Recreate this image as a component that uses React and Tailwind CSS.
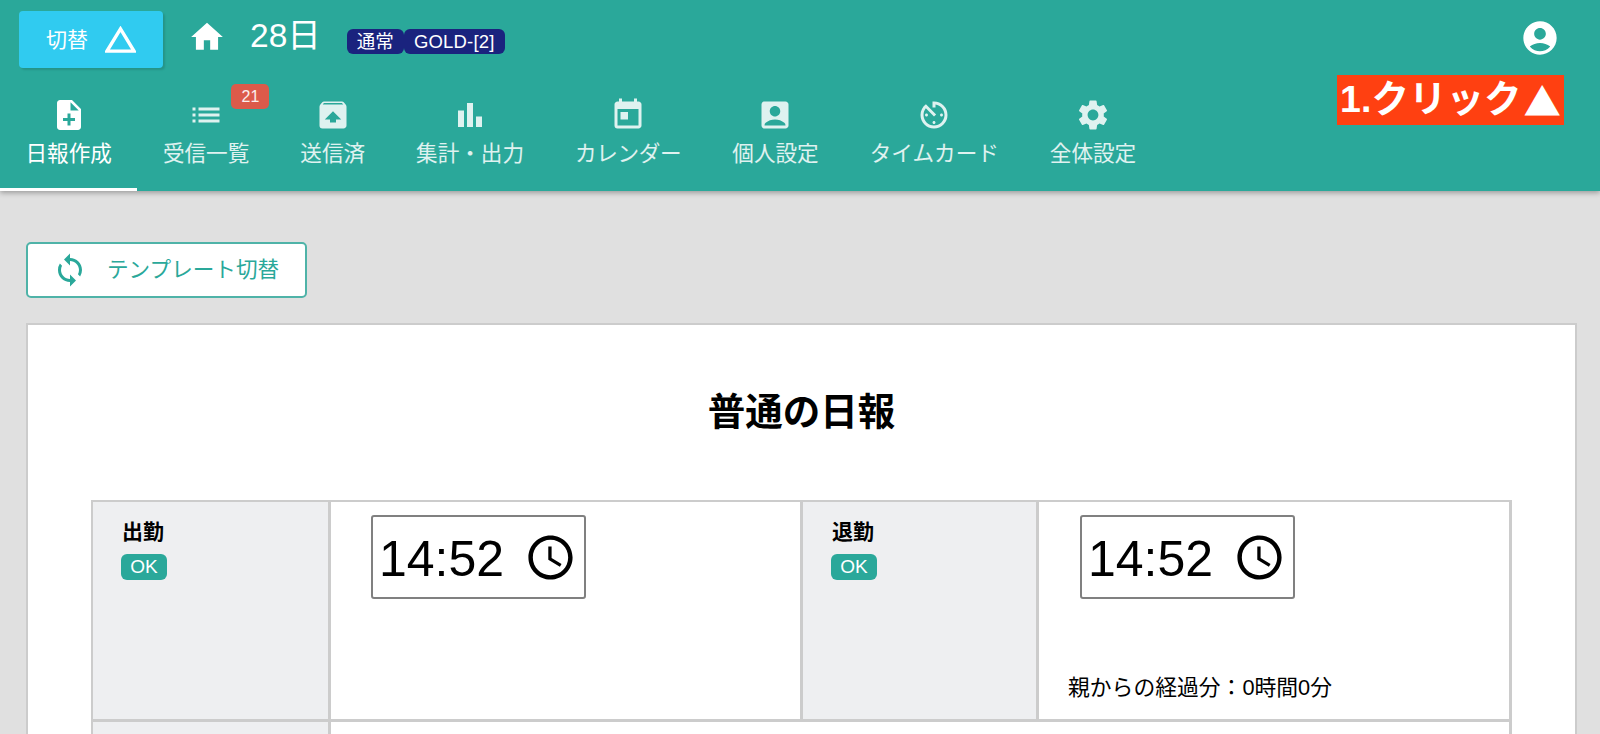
// App.jsx
import {
  MdHome,
  MdNoteAdd,
  MdList,
  MdUnarchive,
  MdBarChart,
  MdToday,
  MdAccountBox,
  MdAvTimer,
  MdSettings,
  MdAccountCircle,
  MdSync,
  MdAccessTime,
} from "react-icons/md";

const TABS = [
  { label: "日報作成", Icon: MdNoteAdd, active: true },
  { label: "受信一覧", Icon: MdList, badge: "21" },
  { label: "送信済", Icon: MdUnarchive },
  { label: "集計・出力", Icon: MdBarChart },
  { label: "カレンダー", Icon: MdToday, tight: true },
  { label: "個人設定", Icon: MdAccountBox },
  { label: "タイムカード", Icon: MdAvTimer },
  { label: "全体設定", Icon: MdSettings },
];

function Tab({ label, Icon, active, badge, tight }) {
  return (
    <div
      className={`relative flex h-[103px] flex-col items-center border-b-[3px] px-[25.5px] pt-[9px] ${
        active ? "border-white text-white" : "border-transparent text-white/85"
      }`}
    >
      <Icon className="h-[36px] w-[36px]" />
      <span className={`mt-[6px] whitespace-nowrap text-[21.6px] leading-[30px] ${tight ? "tracking-[-0.35px]" : ""}`}>
        {label}
      </span>
      {badge && (
        <span className="absolute left-[94px] top-[-4px] flex h-[25px] w-[38px] items-center justify-center rounded-[5px] bg-[#dc5a4a] text-[16px] text-white/90">
          {badge}
        </span>
      )}
    </div>
  );
}

function TimeBox() {
  return (
    <div className="flex h-[84px] w-[215px] items-center rounded-[3px] border-2 border-[#808080] pl-[6px] text-black">
      <span className="mt-[3px] text-[50px] leading-none">14:52</span>
      <MdAccessTime className="ml-[20px] h-[53px] w-[53px]" />
    </div>
  );
}

function LabelCell({ label }) {
  return (
    <div className="flex flex-col items-start bg-[#eeeff1] pl-[29px] pt-[15px]">
      <span className="text-[21px] font-bold leading-[30px] text-black">{label}</span>
      <span className="ml-[-1px] mt-[7px] flex h-[26px] w-[46px] items-center justify-center rounded-[6px] bg-[#2aa89a] text-[19px] text-white">
        OK
      </span>
    </div>
  );
}

export default function App() {
  return (
    <div className="relative h-screen overflow-hidden bg-[#e0e0e0] font-['Liberation_Sans','Noto_Sans_CJK_JP',sans-serif]">
      <header className="h-[191px] bg-[#2aa89a] text-white shadow-[0_2px_5px_rgba(0,0,0,0.3)]">
        <div className="flex h-[88px] items-start pl-[19px] pr-[40px] pt-[11px]">
          <button className="flex h-[57px] w-[144px] items-center justify-center gap-[17px] rounded-[4px] bg-[#30cbf0] text-[21px] shadow-[2px_2px_2px_rgba(0,0,0,0.12)]">
            切替
            <svg viewBox="0 0 32 28" className="h-[27px] w-[31px]" fill="none" stroke="white" strokeWidth="3.5">
              <path d="M16 3 L30 26 H2 Z" />
            </svg>
          </button>
          <MdHome className="ml-[25px] mt-[7px] h-[38px] w-[38px]" />
          <span className="ml-[24px] mt-[5px] text-[33.5px] leading-[40px]">28日</span>
          <div className="ml-[26px] mt-[18px] flex leading-[25px]">
            <span className="flex h-[25px] w-[57px] items-center justify-center rounded-[6px] bg-[#1a237e] text-[18.5px]">
              通常
            </span>
            <span className="flex h-[25px] w-[101px] items-center justify-center rounded-[6px] bg-[#1a237e] text-[18.5px] tracking-[0.2px]">
              GOLD-[2]
            </span>
          </div>
          <MdAccountCircle className="ml-auto mt-[7px] h-[40px] w-[40px]" />
        </div>
        <nav className="flex">
          {TABS.map((tab) => (
            <Tab key={tab.label} {...tab} />
          ))}
        </nav>
      </header>

      <div className="absolute left-[1337px] top-[75px] flex h-[50px] w-[227px] items-center justify-center bg-[#ff4011] text-[37.5px] font-bold leading-none text-white">
        1.クリック
        <span className="ml-[2px] font-['Noto_Sans_CJK_JP',sans-serif]">▲</span>
      </div>

      <main className="pl-[26px] pr-[23px] pt-[51px]">
        <button className="flex h-[56px] w-[281px] items-center rounded-[5px] border-2 border-[#4fb3a8] bg-white pl-[24px] text-[21.6px] text-[#2aa89a]">
          <MdSync className="h-[36px] w-[36px]" />
          <span className="ml-[19px] whitespace-nowrap">テンプレート切替</span>
        </button>

        <section className="mt-[25px] border-2 border-[#cccccc] bg-white px-[63px]">
          <h1 className="flex h-[175px] items-center justify-center text-[37.5px] font-bold text-black">普通の日報</h1>
          <div className="grid grid-cols-[235px_469px_233px_470px] gap-[3px] border-2 border-[#cccccc] bg-[#cccccc]">
            <LabelCell label="出勤" />
            <div className="h-[217px] bg-white pl-[40px] pt-[13px]">
              <TimeBox />
            </div>
            <LabelCell label="退勤" />
            <div className="flex h-[217px] flex-col bg-white pb-[16px] pl-[29px] pt-[13px]">
              <div className="ml-[12px]">
                <TimeBox />
              </div>
              <span className="mt-auto text-[21.8px] leading-[30px] text-black">親からの経過分：0時間0分</span>
            </div>
            <div className="h-[100px] bg-[#eeeff1]" />
            <div className="col-span-3 h-[100px] bg-white" />
          </div>
        </section>
      </main>
    </div>
  );
}
